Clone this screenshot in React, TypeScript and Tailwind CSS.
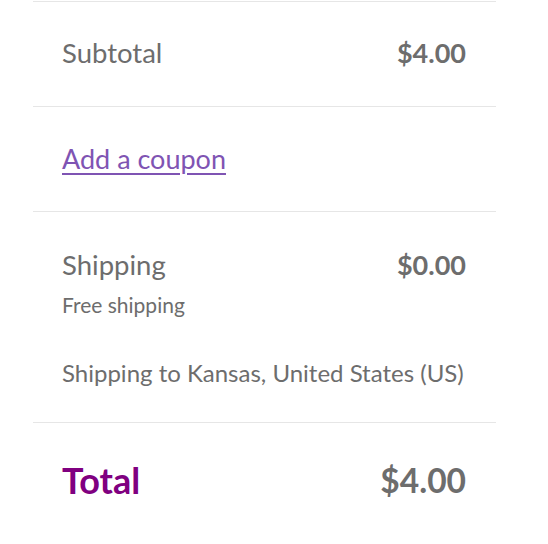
import React from "react";

const App = () => {
  return (
    <div className="min-h-screen bg-white pt-px font-['Lato','Liberation_Sans',sans-serif] text-[#6d6d6d]">
      <div className="mx-[33px] w-[463px]">
        {/* subtotal */}
        <div className="flex items-center justify-between border-t border-[#e6e6e6] pb-[35px] pl-[29px] pr-[30px] pt-[33px]">
          <span className="text-[27.5px] leading-[36px]">Subtotal</span>
          <span className="text-[27px] font-bold leading-[36px]">$4.00</span>
        </div>

        {/* coupon */}
        <div className="border-t border-[#e6e6e6] pb-[34px] pl-[29px] pr-[30px] pt-[34px]">
          <a href="#" className="text-[27px] leading-[36px] text-[#7f54b3] underline underline-offset-[4px]">
            Add a coupon
          </a>
        </div>

        {/* shipping */}
        <div className="border-t border-[#e6e6e6] pb-[33px] pl-[29px] pr-[30px] pt-[35px]">
          <div className="flex items-center justify-between">
            <span className="text-[27.5px] leading-[36px]">Shipping</span>
            <span className="text-[27px] font-bold leading-[36px]">$0.00</span>
          </div>
          <p className="mt-[8px] text-[21px] leading-[28px]">Free shipping</p>
          <p className="mt-[38px] text-[24px] leading-[32px]">Shipping to Kansas, United States (US)</p>
        </div>

        {/* total */}
        <div className="flex items-center justify-between border-t border-[#e6e6e6] pl-[29px] pr-[30px] pt-[35px]">
          <span className="text-[36px] font-bold leading-[44px] text-[#800080]">Total</span>
          <span className="text-[33.5px] font-bold leading-[44px]">$4.00</span>
        </div>
      </div>
    </div>
  );
};

export default App;
